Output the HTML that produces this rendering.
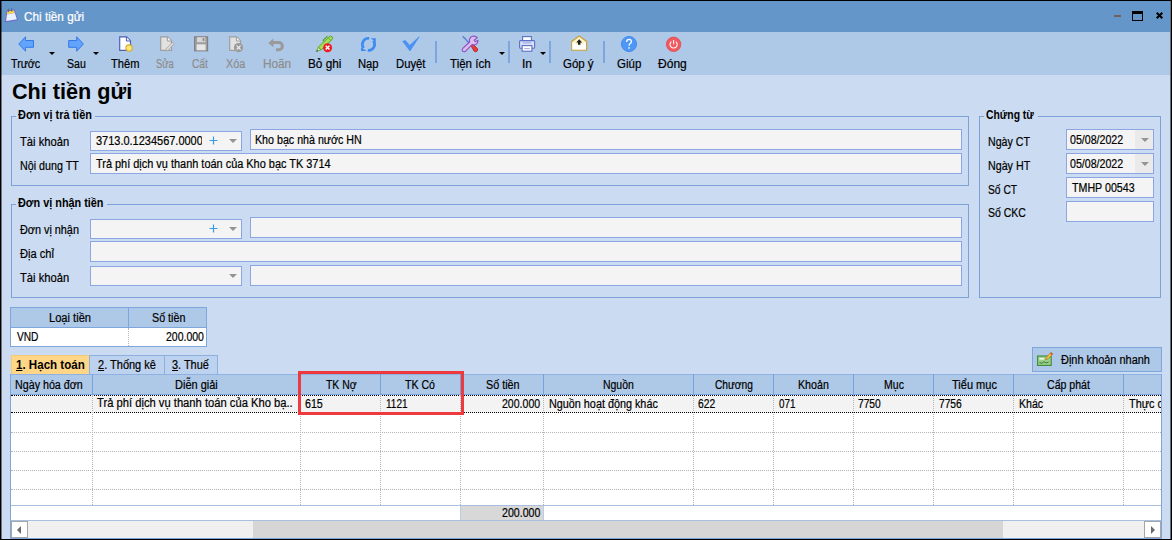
<!DOCTYPE html>
<html><head><meta charset="utf-8"><title>Chi tiền gửi</title>
<style>
*{box-sizing:border-box;margin:0;padding:0}
html,body{width:1172px;height:540px;overflow:hidden;background:#000;font-family:"Liberation Sans",sans-serif;}
#win{position:absolute;left:1px;top:1px;width:1170px;height:538px;background:#CBDBF1;overflow:hidden}
.abs,.t,.gb,.inp,.hd,.ic{position:absolute}
.t{white-space:nowrap;line-height:20px;height:20px;display:block;-webkit-text-stroke:0.2px currentColor}
#title{left:0;top:0;width:1169px;height:31px;background:#6596C9}
#tool{left:0;top:31px;width:1169px;height:43px;background:#AEC8E7}
.gb{border:1px solid #7DA1D8}
.lg{position:absolute;background:#CBDBF1;height:3px;top:-1px}
.inp{background:#F4F4F4;border:1px solid #8CA6E3}
.sep{position:absolute;top:40px;width:2px;height:22px;background:#7FA6DC}
.dd{position:absolute;width:0;height:0;border-left:3px solid transparent;border-right:3px solid transparent;border-top:3px solid #000}
.gtri{position:absolute;width:0;height:0;border-left:4px solid transparent;border-right:4px solid transparent;border-top:4px solid #939393}
.hd{background:#AEC8E7;border-right:1px solid #77A1DA;height:20px;top:0}
.vl{position:absolute;width:0;border-left:1px dotted #b4b4b4}
.hl{position:absolute;left:1px;width:1150px;height:0;border-top:1px dotted #b4b4b4}
svg{position:absolute;overflow:visible}
</style></head><body>
<div id="win">
<div id="title" class="abs"></div>
<div id="tool" class="abs"></div>
<!-- window controls -->
<div class="abs" style="left:1113px;top:14px;width:7px;height:2px;background:#6E6259"></div>
<div class="abs" style="left:1131px;top:10px;width:11px;height:10px;border:1px solid #000;border-top-width:3px"></div>
<svg style="left:1155px;top:11px" width="7" height="7" viewBox="0 0 7 7"><path d="M0.7 0.7L6.3 6.3M6.3 0.7L0.7 6.3" stroke="#000" stroke-width="2" fill="none"/></svg>

<!-- toolbar separators & dropdown triangles -->
<div class="sep" style="left:434px"></div><div class="sep" style="left:507px"></div><div class="sep" style="left:548px"></div><div class="sep" style="left:602px"></div>
<div class="dd" style="left:48px;top:51px"></div><div class="dd" style="left:92px;top:51px"></div><div class="dd" style="left:498px;top:51px"></div><div class="dd" style="left:539px;top:51px"></div>

<!-- group boxes -->
<div class="gb" style="left:10px;top:115px;width:958px;height:70px"><div class="lg" style="left:4px;width:79px"></div></div>
<div class="gb" style="left:10px;top:203px;width:958px;height:94px"><div class="lg" style="left:4px;width:91px"></div></div>
<div class="gb" style="left:978px;top:115px;width:182px;height:182px"><div class="lg" style="left:4px;width:54px"></div></div>

<!-- inputs group 1 -->
<div class="inp" style="left:89px;top:130px;width:152px;height:20px"></div>
<div class="inp" style="left:249px;top:128px;width:712px;height:21px"></div>
<div class="inp" style="left:89px;top:152px;width:872px;height:21px"></div>
<!-- inputs group 2 -->
<div class="inp" style="left:89px;top:218px;width:152px;height:20px"></div>
<div class="inp" style="left:249px;top:216px;width:712px;height:21px"></div>
<div class="inp" style="left:89px;top:240px;width:872px;height:21px"></div>
<div class="inp" style="left:89px;top:265px;width:152px;height:20px"></div>
<div class="inp" style="left:249px;top:264px;width:712px;height:21px"></div>
<!-- inputs group 3 -->
<div class="inp" style="left:1065px;top:128px;width:88px;height:21px"><div class="abs" style="right:0;top:0;width:18px;height:19px;background:#EAEAEA"></div></div>
<div class="inp" style="left:1065px;top:152px;width:88px;height:21px"><div class="abs" style="right:0;top:0;width:18px;height:19px;background:#EAEAEA"></div></div>
<div class="inp" style="left:1065px;top:176px;width:88px;height:21px"></div>
<div class="inp" style="left:1065px;top:200px;width:88px;height:21px"></div>
<!-- combo glyphs -->
<div class="gtri" style="left:227.5px;top:137.5px"></div>
<div class="gtri" style="left:227.5px;top:225.7px"></div>
<div class="gtri" style="left:227.5px;top:272.6px"></div>
<div class="gtri" style="left:1139.5px;top:136.8px"></div>
<div class="gtri" style="left:1139.5px;top:160.8px"></div>
<svg style="left:207.5px;top:135.0px" width="9" height="9" viewBox="0 0 9 9"><path d="M4.5 0.5V8.5M0.5 4.5H8.5" stroke="#3C9BE6" stroke-width="1.2"/></svg>
<svg style="left:207.5px;top:223.2px" width="9" height="9" viewBox="0 0 9 9"><path d="M4.5 0.5V8.5M0.5 4.5H8.5" stroke="#3C9BE6" stroke-width="1.2"/></svg>
<!-- currency table -->
<div class="abs" style="left:9px;top:306px;width:197px;height:40px;border:1px solid #7FA6DC;background:#fff">
  <div class="abs" style="left:0;top:0;width:195px;height:20px;background:#AEC8E7;border-bottom:1px solid #7FA6DC"></div>
  <div class="abs" style="left:117px;top:0;width:1px;height:20px;background:#7FA6DC"></div>
  <div class="abs" style="left:117px;top:20px;width:0;height:18px;border-left:1px dotted #b4b4b4"></div>
</div>

<!-- tabs -->
<div class="abs" style="left:10px;top:354px;width:78px;height:20px;background:#FFD586;border-top:1px solid #F4C978;border-left:1px solid #F4C978"></div>
<div class="abs" style="left:88px;top:354px;width:76px;height:20px;background:#BDD2EE;border:1px solid #8DB0E0;border-bottom:none"></div>
<div class="abs" style="left:164px;top:354px;width:53px;height:20px;background:#BDD2EE;border:1px solid #8DB0E0;border-left:none;border-bottom:none"></div>

<!-- quick button -->
<div class="abs" style="left:1031px;top:346px;width:130px;height:25px;background:#AEC8E7;border:1px solid #7FA6DC"></div>

<!-- grid -->
<div class="abs" id="grid" style="left:9px;top:373px;width:1152px;height:165px;background:#fff;overflow:hidden">
<div class="abs" style="left:0;top:0;width:1152px;height:21px;background:#AEC8E7;border-top:1px solid #8FB2E2;border-bottom:1px solid #7FA6DC"></div>
<div class="abs" style="left:82px;top:0;width:1px;height:21px;background:#77A1DA"></div>
<div class="abs" style="left:290px;top:0;width:1px;height:21px;background:#77A1DA"></div>
<div class="abs" style="left:370px;top:0;width:1px;height:21px;background:#77A1DA"></div>
<div class="abs" style="left:450px;top:0;width:1px;height:21px;background:#77A1DA"></div>
<div class="abs" style="left:533px;top:0;width:1px;height:21px;background:#77A1DA"></div>
<div class="abs" style="left:683px;top:0;width:1px;height:21px;background:#77A1DA"></div>
<div class="abs" style="left:763px;top:0;width:1px;height:21px;background:#77A1DA"></div>
<div class="abs" style="left:843px;top:0;width:1px;height:21px;background:#77A1DA"></div>
<div class="abs" style="left:923px;top:0;width:1px;height:21px;background:#77A1DA"></div>
<div class="abs" style="left:1003px;top:0;width:1px;height:21px;background:#77A1DA"></div>
<div class="abs" style="left:1113px;top:0;width:1px;height:21px;background:#77A1DA"></div>
<div class="abs" style="left:1px;top:21px;width:1150px;height:18px;background:#F3F3F3;border-top:1px dotted #000;border-bottom:1px dotted #000"></div>
<div class="hl" style="top:58px"></div>
<div class="hl" style="top:77px"></div>
<div class="hl" style="top:96px"></div>
<div class="hl" style="top:115px"></div>
<div class="vl" style="left:82px;top:21px;height:110px"></div>
<div class="vl" style="left:290px;top:21px;height:110px"></div>
<div class="vl" style="left:370px;top:21px;height:110px"></div>
<div class="vl" style="left:450px;top:21px;height:110px"></div>
<div class="vl" style="left:533px;top:21px;height:110px"></div>
<div class="vl" style="left:683px;top:21px;height:110px"></div>
<div class="vl" style="left:763px;top:21px;height:110px"></div>
<div class="vl" style="left:843px;top:21px;height:110px"></div>
<div class="vl" style="left:923px;top:21px;height:110px"></div>
<div class="vl" style="left:1003px;top:21px;height:110px"></div>
<div class="vl" style="left:1113px;top:21px;height:110px"></div>
<div class="abs" style="left:1px;top:131px;width:1150px;height:1px;background:#A9BFDF"></div>
<div class="abs" style="left:450px;top:132px;width:84px;height:14px;background:#D8D8D8;border-left:1px solid #B9CCE7;border-right:1px solid #B9CCE7"></div>
<div class="abs" style="left:1px;top:146px;width:1150px;height:1px;background:#A9BFDF"></div>
<div class="abs" style="left:1px;top:147px;width:1150px;height:17px;background:#F0F0F0"></div>
<div class="abs" style="left:243px;top:147px;width:750px;height:17px;background:#D6D6D6"></div>
<div class="abs" style="left:1px;top:147px;width:17px;height:17px;background:#fff;border:1px solid #A6A6A6"></div>
<div class="abs" style="left:1134px;top:147px;width:17px;height:17px;background:#fff;border:1px solid #A6A6A6"></div>
<div class="abs" style="left:7px;top:152px;width:0;height:0;border-top:4px solid transparent;border-bottom:4px solid transparent;border-right:4px solid #6a6a6a"></div>
<div class="abs" style="left:1141px;top:152px;width:0;height:0;border-top:4px solid transparent;border-bottom:4px solid transparent;border-left:4px solid #6a6a6a"></div>
<div class="abs" style="left:0;top:0;width:1px;height:165px;background:#7FA6DC"></div>
<div class="abs" style="left:1151px;top:0;width:1px;height:165px;background:#7FA6DC"></div>
<div class="abs" style="left:0;top:164px;width:1152px;height:1px;background:#7FA6DC"></div>
</div>
<!-- red highlight -->
<div class="abs" style="left:297px;top:370px;width:166px;height:44px;border:3px solid #EE393E"></div>

<div class="abs" style="left:1169px;top:0;width:1px;height:538px;background:rgba(0,0,0,0.5)"></div>
<div id="ledge" class="abs" style="left:0;top:0;width:1px;height:538px;background:rgba(0,0,0,0.45)"></div>
<div class="abs" style="left:-1px;top:-1px;width:0;height:0">
<!-- app icon -->
<svg style="left:5px;top:8px" width="14" height="16" viewBox="0 0 14 16">
  <path d="M1.9 3.1L9.2 1.8L12.6 11.8L0.3 14Z" fill="#857FD8" stroke="#6C66C4" stroke-width="0.8"/>
  <path d="M2.3 3.5L8.9 2.4L9.8 5L1.9 6.3Z" fill="#F7D548"/>
  <path d="M1.9 6.4L9.8 5.1L11.8 11.2L1.2 13Z" fill="#E6F0FF"/>
  <path d="M4 0.8Q3 0.9 3.2 2.2L3.6 4M7.2 0.3Q6.2 0.4 6.4 1.7L6.8 3.5" stroke="#5A5A66" stroke-width="0.9" fill="none"/>
</svg>
<!-- Truoc -->
<svg style="left:18px;top:36px" width="16" height="16" viewBox="0 0 16 16"><path d="M0.8 8L7.5 0.8V4.5H15.5V11.3H7.5V15.2Z" fill="#62A3FC" stroke="#3479E6" stroke-width="1" stroke-linejoin="miter"/></svg>
<!-- Sau -->
<svg style="left:68px;top:36px" width="16" height="16" viewBox="0 0 16 16"><path d="M15.4 8L8.7 0.8V4.5H0.7V11.3H8.7V15.2Z" fill="#62A3FC" stroke="#3479E6" stroke-width="1"/></svg>
<!-- Them -->
<svg style="left:119px;top:36px" width="16" height="16" viewBox="0 0 16 16">
  <path d="M0.7 0.9H7.6L11.5 4.8V14.4H0.7Z" fill="#fff" stroke="#4D61B5" stroke-width="1.2"/>
  <path d="M7.4 1V5H11.4" fill="#E8ECFA" stroke="#4D61B5" stroke-width="1"/>
  <circle cx="10.1" cy="12.1" r="3.2" fill="#FCE680" stroke="#D9A928" stroke-width="1.1"/>
</svg>
<!-- Sua -->
<svg style="left:160px;top:36px" width="16" height="16" viewBox="0 0 16 16">
  <path d="M0.7 0.9H7.6L11.5 4.8V14.4H0.7Z" fill="#E2E2E2" stroke="#9E9E9E" stroke-width="1.2"/>
  <path d="M7.4 1V5H11.4" fill="#F2F2F2" stroke="#9E9E9E" stroke-width="1"/>
  <path d="M5.6 15.2L6.4 12.4L12.6 6.2L14.2 7.8L8.2 14.2Z" fill="#DCDCDC" stroke="#A2A2A2" stroke-width="0.8"/>
</svg>
<!-- Cat -->
<svg style="left:194px;top:36px" width="16" height="16" viewBox="0 0 16 16">
  <rect x="0.6" y="0.8" width="13" height="14" fill="#9E9E9E" stroke="#7F7F7F" stroke-width="1.1"/>
  <rect x="3" y="1.2" width="8.3" height="5" fill="#D6D6D6"/>
  <rect x="8.6" y="2" width="1.8" height="3" fill="#8f8f8f"/>
  <rect x="2.6" y="8.3" width="9" height="6" fill="#E6E6E6"/>
</svg>
<!-- Xoa -->
<svg style="left:229px;top:36px" width="16" height="16" viewBox="0 0 16 16">
  <path d="M0.7 0.9H7.6L11.5 4.8V14.4H0.7Z" fill="#E2E2E2" stroke="#9E9E9E" stroke-width="1.2"/>
  <path d="M7.4 1V5H11.4" fill="#F2F2F2" stroke="#9E9E9E" stroke-width="1"/>
  <circle cx="9.5" cy="11.6" r="4.6" fill="#9A9A9A"/>
  <path d="M7.6 9.6L11.6 13.6M11.6 9.6L7.6 13.6" stroke="#F0F0F0" stroke-width="1.2"/>
</svg>
<!-- Hoan -->
<svg style="left:268px;top:38px" width="17" height="14" viewBox="0 0 17 14">
  <path d="M0.3 4.9L5.5 0.5V3.1H10.8A5.1 5.1 0 0 1 10.8 13.3H8V10.3H10.8A2.1 2.1 0 0 0 10.8 6.1H5.5V9.2Z" fill="#9A9A9A"/>
</svg>
<!-- Bo ghi -->
<svg style="left:316px;top:36px" width="17" height="17" viewBox="0 0 17 17">
  <g transform="translate(0.4,15.6) rotate(-43.5)">
    <path d="M0 0L4.6 -1.9V1.9Z" fill="#CFE8B0" stroke="#4E9A22" stroke-width="0.7"/>
    <path d="M0 0L1.6 -0.7V0.7Z" fill="#222"/>
    <path d="M4.6 -2H19.6Q21.6 -2 21.6 0Q21.6 2 19.6 2H4.6Z" fill="#A4DF58" stroke="#57A21D" stroke-width="0.9"/>
    <path d="M12.6 -2V-3.6H18.6" fill="none" stroke="#57A21D" stroke-width="1"/>
    <path d="M18.2 -2V2" stroke="#57A21D" stroke-width="0.8"/>
  </g>
  <circle cx="11.6" cy="11.7" r="4.5" fill="#EE1D25"/>
  <path d="M9.7 9.8L13.5 13.6M13.5 9.8L9.7 13.6" stroke="#fff" stroke-width="1.4"/>
</svg>
<!-- Nap -->
<svg style="left:360px;top:36px" width="17" height="17" viewBox="0 0 17 17">
  <path d="M9.2 2.3A6.1 6.1 0 0 0 3.6 12" fill="none" stroke="#3E8CF2" stroke-width="2.7"/>
  <path d="M1 11.2V15.1H6.6Z" fill="#3E8CF2"/>
  <path d="M7.8 14.4A6.1 6.1 0 0 0 13.4 4.7" fill="none" stroke="#3E8CF2" stroke-width="2.7"/>
  <path d="M10.6 2.2H15.8V6.2Z" fill="#3E8CF2"/>
</svg>
<!-- Duyet -->
<svg style="left:402px;top:36px" width="18" height="16" viewBox="0 0 18 16">
  <path d="M0.7 5.3L3.4 4.6L7.7 9.4L17.2 0.8L8 14.9Z" fill="#4A92F5" stroke="#3C86EE" stroke-width="0.6"/>
</svg>
<!-- Tien ich -->
<svg style="left:461px;top:35px" width="18" height="18" viewBox="0 0 18 18">
  <path d="M1.6 1.4L3 2.6L9.5 9.6" stroke="#5E7FD0" stroke-width="1.4" fill="none"/>
  <path d="M9.6 9.8L11.3 8.4L16.4 13.6Q17.2 15.3 15.8 16.4Q14.3 17.3 13 16Z" fill="#EA3840" stroke="#B8232B" stroke-width="0.9"/>
  <path d="M11.5 1.3Q14.5 0.6 16.2 2.6L13.2 5L14.2 6.6L16.9 5.6Q17 8.6 14.4 9.6Q12.6 10.2 11.2 9.4L4.6 16.2Q3 17.4 1.6 16.2Q0.6 14.8 1.8 13.4L8.6 7Q7.6 2.8 11.5 1.3Z" fill="#DDBCF0" stroke="#8B4FBE" stroke-width="1.1"/>
</svg>
<!-- In -->
<svg style="left:519px;top:36px" width="17" height="16" viewBox="0 0 17 16">
  <rect x="3.6" y="0.6" width="8.8" height="5" fill="#fff" stroke="#5A6FC6" stroke-width="1.1"/>
  <rect x="0.6" y="4.6" width="15" height="7.6" rx="1" fill="#DDE3F8" stroke="#5A6FC6" stroke-width="1.1"/>
  <rect x="3.6" y="5.2" width="8.8" height="2.4" fill="#AEB9EC"/>
  <rect x="3.1" y="9.6" width="9.8" height="5.6" fill="#fff" stroke="#5A6FC6" stroke-width="1.1"/>
  <path d="M5.2 12.6H10.8" stroke="#9FAAE0" stroke-width="1"/>
</svg>
<!-- Gop y -->
<svg style="left:571px;top:35px" width="17" height="17" viewBox="0 0 17 17">
  <path d="M0.8 15.2V6.4L8.2 1L15.6 6.4V15.2Z" fill="#FFF3C9" stroke="#C9A23C" stroke-width="1.2"/>
  <path d="M1.4 7L8.2 11L15 7V14.6H1.4Z" fill="#fff"/>
  <path d="M8.2 4.2L11.2 7.4H9.4V9.8H7V7.4H5.2Z" fill="#1d1d1d"/>
</svg>
<!-- Giup -->
<svg style="left:621px;top:36px" width="16" height="16" viewBox="0 0 16 16">
  <circle cx="8" cy="8" r="7.6" fill="#4E97F6" stroke="#3B82E4" stroke-width="0.8"/>
  <path d="M5.6 6Q5.7 3.4 8.1 3.4Q10.5 3.5 10.4 5.6Q10.3 7 8.9 7.8Q8.1 8.4 8.1 9.8" fill="none" stroke="#fff" stroke-width="1.3"/>
  <rect x="7.4" y="11.2" width="1.4" height="1.5" fill="#fff"/>
</svg>
<!-- Dong -->
<svg style="left:666px;top:36px" width="16" height="16" viewBox="0 0 16 16">
  <circle cx="7.6" cy="8.3" r="7.2" fill="#F0595E" stroke="#E2494F" stroke-width="0.8"/>
  <path d="M5.4 5.6A3.6 3.6 0 1 0 9.8 5.6" fill="none" stroke="#fff" stroke-width="1.05"/>
  <path d="M7.6 4V8.3" stroke="#fff" stroke-width="1.05"/>
</svg>
<!-- quick-entry button icon -->
<svg style="left:1037px;top:351px" width="17" height="16" viewBox="0 0 17 16">
  <rect x="0.6" y="5" width="13.6" height="9.4" fill="#9AD08A" stroke="#3F8A3A" stroke-width="1.1"/>
  <rect x="2.3" y="7" width="5" height="1.6" fill="#EAF7E4"/>
  <path d="M2.4 11.6L5 12.2L7 10.6L9 12L11.6 11" fill="none" stroke="#2E6E2E" stroke-width="0.9"/>
  <path d="M8.6 8.6L9.4 6.2L14 1.4L15.8 3L11 7.8Z" fill="#F3C64A" stroke="#B5791E" stroke-width="0.8"/>
  <path d="M13.4 2L15.2 3.6" stroke="#D8433F" stroke-width="1.4"/>
</svg>
</div>

<div class="abs" style="left:-1px;top:-1px;width:0;height:0">
<span class="t" style="left:24.40px;top:7.00px;transform-origin:0 0;transform:scaleX(0.9798);font-size:12px;color:#fff;">Chi tiền gửi</span>
<span class="t" style="left:11.00px;top:54.00px;transform-origin:0 0;transform:scaleX(0.8907);font-size:12px;color:#000;">Trước</span>
<span class="t" style="left:67.00px;top:54.00px;transform-origin:0 0;transform:scaleX(0.8802);font-size:12px;color:#000;">Sau</span>
<span class="t" style="left:111.30px;top:54.00px;transform-origin:0 0;transform:scaleX(0.9258);font-size:12px;color:#000;">Thêm</span>
<span class="t" style="left:156.10px;top:54.00px;transform-origin:0 0;transform:scaleX(0.7857);font-size:12px;color:#8d8d8d;">Sửa</span>
<span class="t" style="left:192.10px;top:54.00px;transform-origin:0 0;transform:scaleX(0.8480);font-size:12px;color:#8d8d8d;">Cất</span>
<span class="t" style="left:225.90px;top:54.00px;transform-origin:0 0;transform:scaleX(0.8949);font-size:12px;color:#8d8d8d;">Xóa</span>
<span class="t" style="left:262.70px;top:54.00px;transform-origin:0 0;transform:scaleX(0.9817);font-size:12px;color:#8d8d8d;">Hoãn</span>
<span class="t" style="left:307.80px;top:54.00px;transform-origin:0 0;transform:scaleX(0.9832);font-size:12px;color:#000;">Bỏ ghi</span>
<span class="t" style="left:357.90px;top:54.00px;transform-origin:0 0;transform:scaleX(0.9355);font-size:12px;color:#000;">Nạp</span>
<span class="t" style="left:395.90px;top:54.00px;transform-origin:0 0;transform:scaleX(0.9402);font-size:12px;color:#000;">Duyệt</span>
<span class="t" style="left:450.30px;top:54.00px;transform-origin:0 0;transform:scaleX(0.9623);font-size:12px;color:#000;">Tiện ích</span>
<span class="t" style="left:521.89px;top:54.00px;transform-origin:0 0;transform:scaleX(1.0079);font-size:12px;color:#000;">In</span>
<span class="t" style="left:563.20px;top:54.00px;transform-origin:0 0;transform:scaleX(0.9558);font-size:12px;color:#000;">Góp ý</span>
<span class="t" style="left:617.20px;top:54.00px;transform-origin:0 0;transform:scaleX(0.9582);font-size:12px;color:#000;">Giúp</span>
<span class="t" style="left:658.20px;top:54.00px;transform-origin:0 0;transform:scaleX(1.0031);font-size:12px;color:#000;">Đóng</span>
<span class="t" style="left:11.90px;top:81.50px;transform-origin:0 0;transform:scaleX(0.9831);font-size:22px;color:#000;font-weight:bold;-webkit-text-stroke:0;">Chi tiền gửi</span>
<span class="t" style="left:18.10px;top:105.00px;transform-origin:0 0;transform:scaleX(0.9100);font-size:12px;color:#000;font-weight:bold;-webkit-text-stroke:0;">Đơn vị trả tiền</span>
<span class="t" style="left:18.30px;top:193.00px;transform-origin:0 0;transform:scaleX(0.9044);font-size:12px;color:#000;font-weight:bold;-webkit-text-stroke:0;">Đơn vị nhận tiền</span>
<span class="t" style="left:986.30px;top:105.00px;transform-origin:0 0;transform:scaleX(0.8639);font-size:12px;color:#000;font-weight:bold;-webkit-text-stroke:0;">Chứng từ</span>
<span class="t" style="left:20.40px;top:132.00px;transform-origin:0 0;transform:scaleX(0.9322);font-size:12px;color:#000;">Tài khoản</span>
<span class="t" style="left:20.40px;top:156.00px;transform-origin:0 0;transform:scaleX(0.8936);font-size:12px;color:#000;">Nội dung TT</span>
<span class="t" style="left:20.20px;top:220.00px;transform-origin:0 0;transform:scaleX(0.9030);font-size:12px;color:#000;">Đơn vị nhận</span>
<span class="t" style="left:20.20px;top:244.00px;transform-origin:0 0;transform:scaleX(0.9240);font-size:12px;color:#000;">Địa chỉ</span>
<span class="t" style="left:20.40px;top:268.00px;transform-origin:0 0;transform:scaleX(0.9322);font-size:12px;color:#000;">Tài khoản</span>
<span class="t" style="left:988.30px;top:132.00px;transform-origin:0 0;transform:scaleX(0.8872);font-size:12px;color:#000;">Ngày CT</span>
<span class="t" style="left:988.30px;top:156.00px;transform-origin:0 0;transform:scaleX(0.8914);font-size:12px;color:#000;">Ngày HT</span>
<span class="t" style="left:988.30px;top:180.00px;transform-origin:0 0;transform:scaleX(0.8565);font-size:12px;color:#000;">Số CT</span>
<span class="t" style="left:988.30px;top:203.00px;transform-origin:0 0;transform:scaleX(0.8745);font-size:12px;color:#000;">Số CKC</span>
<div class="abs" style="left:90px;top:131.00px;width:111.5px;height:20px;overflow:hidden"><span class="t" style="left:6.20px;top:0px;transform-origin:0 0;transform:scaleX(0.9145);font-size:12px;color:#000;">3713.0.1234567.0000</span></div>
<span class="t" style="left:255.40px;top:130.00px;transform-origin:0 0;transform:scaleX(0.8894);font-size:12px;color:#000;">Kho bạc nhà nước HN</span>
<span class="t" style="left:95.80px;top:154.00px;transform-origin:0 0;transform:scaleX(0.9111);font-size:12px;color:#000;">Trả phí dịch vụ thanh toán của Kho bạc TK 3714</span>
<span class="t" style="left:1070.40px;top:130.00px;transform-origin:0 0;transform:scaleX(0.8843);font-size:12px;color:#000;">05/08/2022</span>
<span class="t" style="left:1070.40px;top:154.00px;transform-origin:0 0;transform:scaleX(0.8843);font-size:12px;color:#000;">05/08/2022</span>
<span class="t" style="left:1071.70px;top:178.00px;transform-origin:0 0;transform:scaleX(0.8884);font-size:12px;color:#000;">TMHP 00543</span>
<span class="t" style="left:49.30px;top:308.00px;transform-origin:0 0;transform:scaleX(0.9263);font-size:12px;color:#000;">Loại tiền</span>
<span class="t" style="left:151.60px;top:308.00px;transform-origin:0 0;transform:scaleX(0.8941);font-size:12px;color:#000;">Số tiền</span>
<span class="t" style="left:16.70px;top:327.00px;transform-origin:0 0;transform:scaleX(0.8453);font-size:12px;color:#000;">VND</span>
<span class="t" style="left:166.20px;top:327.00px;transform-origin:0 0;transform:scaleX(0.8741);font-size:12px;color:#000;">200.000</span>
<span class="t" style="left:16.00px;top:355.00px;transform-origin:0 0;transform:scaleX(0.9631);font-size:12px;color:#000;font-weight:bold;-webkit-text-stroke:0;"><u>1</u>. Hạch toán</span>
<span class="t" style="left:97.80px;top:355.00px;transform-origin:0 0;transform:scaleX(0.9168);font-size:12px;color:#000;"><u>2</u>. Thống kê</span>
<span class="t" style="left:171.60px;top:355.00px;transform-origin:0 0;transform:scaleX(0.9093);font-size:12px;color:#000;"><u>3</u>. Thuế</span>
<span class="t" style="left:1061.10px;top:350.00px;transform-origin:0 0;transform:scaleX(0.9128);font-size:12px;color:#000;">Định khoản nhanh</span>
<span class="t" style="left:14.60px;top:375.00px;transform-origin:0 0;transform:scaleX(0.8917);font-size:12px;color:#000;">Ngày hóa đơn</span>
<span class="t" style="left:174.60px;top:375.00px;transform-origin:0 0;transform:scaleX(0.9168);font-size:12px;color:#000;">Diễn giải</span>
<span class="t" style="left:325.60px;top:375.00px;transform-origin:0 0;transform:scaleX(0.8689);font-size:12px;color:#000;">TK Nợ</span>
<span class="t" style="left:405.40px;top:375.00px;transform-origin:0 0;transform:scaleX(0.8796);font-size:12px;color:#000;">TK Có</span>
<span class="t" style="left:485.50px;top:375.00px;transform-origin:0 0;transform:scaleX(0.8995);font-size:12px;color:#000;">Số tiền</span>
<span class="t" style="left:603.00px;top:375.00px;transform-origin:0 0;transform:scaleX(0.8706);font-size:12px;color:#000;">Nguồn</span>
<span class="t" style="left:715.10px;top:375.00px;transform-origin:0 0;transform:scaleX(0.8493);font-size:12px;color:#000;">Chương</span>
<span class="t" style="left:798.30px;top:375.00px;transform-origin:0 0;transform:scaleX(0.8876);font-size:12px;color:#000;">Khoản</span>
<span class="t" style="left:883.50px;top:375.00px;transform-origin:0 0;transform:scaleX(0.8778);font-size:12px;color:#000;">Mục</span>
<span class="t" style="left:951.90px;top:375.00px;transform-origin:0 0;transform:scaleX(0.9182);font-size:12px;color:#000;">Tiểu mục</span>
<span class="t" style="left:1047.30px;top:375.00px;transform-origin:0 0;transform:scaleX(0.8811);font-size:12px;color:#000;">Cấp phát</span>
<span class="t" style="left:97.40px;top:393.00px;transform-origin:0 0;transform:scaleX(0.9333);font-size:12px;color:#000;">Trả phí dịch vụ thanh toán của Kho bạ..</span>
<span class="t" style="left:305.10px;top:394.00px;transform-origin:0 0;transform:scaleX(0.8895);font-size:12px;color:#000;">615</span>
<span class="t" style="left:386.20px;top:394.00px;transform-origin:0 0;transform:scaleX(0.8343);font-size:12px;color:#000;">1121</span>
<span class="t" style="left:502.20px;top:394.00px;transform-origin:0 0;transform:scaleX(0.8787);font-size:12px;color:#000;">200.000</span>
<span class="t" style="left:548.80px;top:394.00px;transform-origin:0 0;transform:scaleX(0.9009);font-size:12px;color:#000;">Nguồn hoạt động khác</span>
<span class="t" style="left:698.40px;top:394.00px;transform-origin:0 0;transform:scaleX(0.8551);font-size:12px;color:#000;">622</span>
<span class="t" style="left:778.50px;top:394.00px;transform-origin:0 0;transform:scaleX(0.8207);font-size:12px;color:#000;">071</span>
<span class="t" style="left:858.40px;top:394.00px;transform-origin:0 0;transform:scaleX(0.8512);font-size:12px;color:#000;">7750</span>
<span class="t" style="left:938.50px;top:394.00px;transform-origin:0 0;transform:scaleX(0.8512);font-size:12px;color:#000;">7756</span>
<span class="t" style="left:1018.80px;top:394.00px;transform-origin:0 0;transform:scaleX(0.8811);font-size:12px;color:#000;">Khác</span>
<div class="abs" style="left:1124px;top:394.00px;width:37px;height:20px;overflow:hidden"><span class="t" style="left:5.00px;top:0px;transform-origin:0 0;transform:scaleX(0.9050);font-size:12px;color:#000;">Thực chi</span></div>
<span class="t" style="left:502.20px;top:503.00px;transform-origin:0 0;transform:scaleX(0.8832);font-size:12px;color:#000;">200.000</span>
</div>
</div>
</body></html>
